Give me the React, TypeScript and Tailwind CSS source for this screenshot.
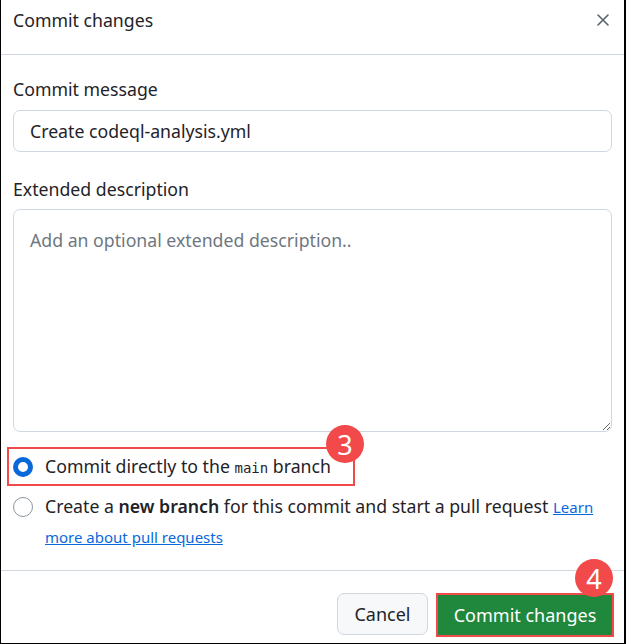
import React, { useState } from 'react';

const font = { fontFamily: '"Noto Sans", "Open Sans", sans-serif' };

function Badge({ n }: { n: number }) {
  return (
    <span className="flex h-[38px] w-[38px] items-center justify-center rounded-full bg-[#f24a4a] text-[27px] leading-none text-white">
      {n}
    </span>
  );
}

function Radio({ on }: { on: boolean }) {
  return on ? (
    <span className="h-[20px] w-[20px] rounded-full border-[5px] border-[#0969da] bg-white" />
  ) : (
    <span className="h-[20px] w-[20px] rounded-full border border-[#8c959f] bg-white" />
  );
}

export default function App() {
  const [message, setMessage] = useState('Create codeql-analysis.yml');
  const [choice, setChoice] = useState('direct');

  return (
    <div
      className="flex h-[644px] w-[626px] flex-col border-b border-l border-r-2 border-black bg-white text-[17.7px] text-[#1f2328]"
      style={font}
    >
      {/* header */}
      <div className="flex h-[55px] shrink-0 items-start justify-between border-b border-[#d0d7de] pl-3 pr-[14px] pt-[8px]">
        <h1 className="leading-[24px]">Commit changes</h1>
        <svg width="14" height="14" viewBox="0 0 14 14" className="mt-[5px] text-[#59636e]">
          <path d="M2 2 L12 12 M12 2 L2 12" stroke="currentColor" strokeWidth="1.6" strokeLinecap="round" />
        </svg>
      </div>

      {/* body */}
      <div className="flex flex-1 flex-col px-3 pt-[22px]">
        <label className="leading-[24px]">Commit message</label>
        <input
          value={message}
          onChange={(e) => setMessage(e.target.value)}
          className="mt-[9px] h-[42px] w-full rounded-[7px] border border-[#d0d7de] px-4 text-[17.7px] outline-none"
        />
        <label className="mt-[25px] leading-[24px]">Extended description</label>
        <textarea
          placeholder="Add an optional extended description.."
          className="mt-[8px] h-[223px] w-full resize-y rounded-[7px] border border-[#d0d7de] px-4 pt-[18px] text-[17.7px] leading-[24px] outline-none placeholder:text-[#6e7781]"
        />

        <div className="relative mt-[15px] -ml-[6px] flex h-[39px] w-[348px] items-center border-2 border-[#f24a4a] pl-[4px]">
          <button onClick={() => setChoice('direct')} className="flex h-5 w-5 items-center justify-center">
            <Radio on={choice === 'direct'} />
          </button>
          <span className="ml-[12px] whitespace-nowrap">
            Commit directly to the{' '}
            <code className="text-[14px]" style={{ fontFamily: '"DejaVu Sans Mono", monospace' }}>
              main
            </code>{' '}
            branch
          </span>
          <span className="absolute -right-[11px] -top-[24px]">
            <Badge n={3} />
          </span>
        </div>

        <div className="mt-[6px] flex items-start">
          <button onClick={() => setChoice('new')} className="mt-[5px] flex h-5 w-5 shrink-0 items-center justify-center">
            <Radio on={choice === 'new'} />
          </button>
          <p className="ml-[12px] leading-[29px]">
            Create a <b className="font-semibold">new branch</b> for this commit and start a pull request{' '}
            <a href="#" className="text-[15px] text-[#0969da] underline">
              Learn more about pull requests
            </a>
          </p>
        </div>
      </div>

      {/* footer */}
      <div className="flex h-[73px] shrink-0 items-start justify-end gap-2 border-t border-[#d0d7de] pr-[10px] pt-[22px]">
        <button className="h-[42px] w-[91px] rounded-[7px] border border-[#d0d7de] bg-[#f6f8fa] text-[18px]">
          Cancel
        </button>
        <div className="relative border-2 border-[#f24a4a]">
          <button className="h-[40px] w-[174px] bg-[#1f883d] text-[18px] text-white">Commit changes</button>
          <span className="absolute -right-[1px] -top-[36px]">
            <Badge n={4} />
          </span>
        </div>
      </div>
    </div>
  );
}
